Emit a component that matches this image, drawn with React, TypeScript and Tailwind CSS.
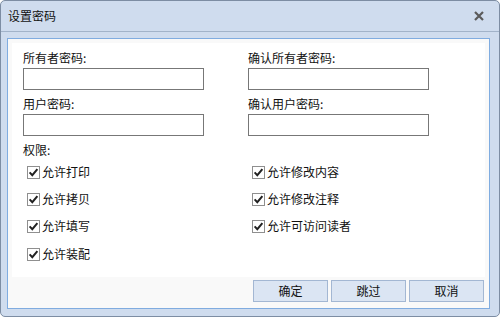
import React from "react";

const font = { fontFamily: '"Noto Sans CJK SC", "Noto Sans", sans-serif' };

function Check({ label }: { label: string }) {
  return (
    <div className="flex items-center h-[14px]">
      <div className="w-[13px] h-[13px] border border-[#8f8f8f] bg-white flex items-center justify-center shrink-0">
        <svg width="11" height="11" viewBox="0 0 11 11">
          <path d="M1.6 5.4 L4.3 8.2 L9.4 2.2" fill="none" stroke="#222" strokeWidth="2" />
        </svg>
      </div>
      <span className="ml-[2px] text-[12px] leading-[14px] text-[#111]">{label}</span>
    </div>
  );
}

function Field({ label, className = "" }: { label: string; className?: string }) {
  return (
    <div className={"flex flex-col " + className}>
      <div className="text-[12px] leading-[14px] h-[14px] text-[#111]">{label}</div>
      <div className="mt-[3px] w-[181px] h-[22px] border border-[#777] bg-white" />
    </div>
  );
}

export default function App() {
  return (
    <div style={font} className="w-[500px] h-[317px] bg-[#cfdcee] border border-[#7d8da3] rounded-[5px] flex flex-col overflow-hidden">
      <div className="h-[31px] border-b border-[#a2b3c9] flex items-center justify-between pl-[7px] pr-[15px] shrink-0">
        <span className="text-[12px] text-[#111] leading-[14px]">设置密码</span>
        <svg width="10" height="10" viewBox="0 0 10 10">
          <path d="M1 1 L9 9 M9 1 L1 9" stroke="#5a5a5a" strokeWidth="2.2" />
        </svg>
      </div>
      <div className="flex-1 pl-[6px] pr-[9px] pt-[6px] pb-[7px] flex">
        <div className="flex-1 border border-[#80ace0] bg-[#f9f9f9] flex flex-col">
          <div className="m-[4px] mb-0 h-[234px] bg-white pl-[11px] pt-[8px]">
            <div className="flex">
              <div className="w-[225px]">
                <Field label="所有者密码:" />
                <Field label="用户密码:" className="mt-[7px]" />
              </div>
              <div>
                <Field label="确认所有者密码:" />
                <Field label="确认用户密码:" className="mt-[7px]" />
              </div>
            </div>
            <div className="mt-[7px] text-[12px] leading-[14px] text-[#111]">权限:</div>
            <div className="flex mt-[8px] pl-[4px]">
              <div className="w-[225px] flex flex-col">
                <Check label="允许打印" />
                <div className="mt-[13px]"><Check label="允许拷贝" /></div>
                <div className="mt-[13px]"><Check label="允许填写" /></div>
                <div className="mt-[14px]"><Check label="允许装配" /></div>
              </div>
              <div className="flex flex-col">
                <Check label="允许修改内容" />
                <div className="mt-[13px]"><Check label="允许修改注释" /></div>
                <div className="mt-[13px]"><Check label="允许可访问读者" /></div>
              </div>
            </div>
          </div>
          <div className="flex justify-end gap-[3px] pr-[5px] pt-[3px]">
            {["确定", "跳过", "取消"].map((t) => (
              <div key={t} className="w-[75px] h-[22px] bg-[#dbe5f3] border border-[#a3b7d3] flex items-center justify-center text-[12px] text-[#111]">
                {t}
              </div>
            ))}
          </div>
        </div>
      </div>
    </div>
  );
}
